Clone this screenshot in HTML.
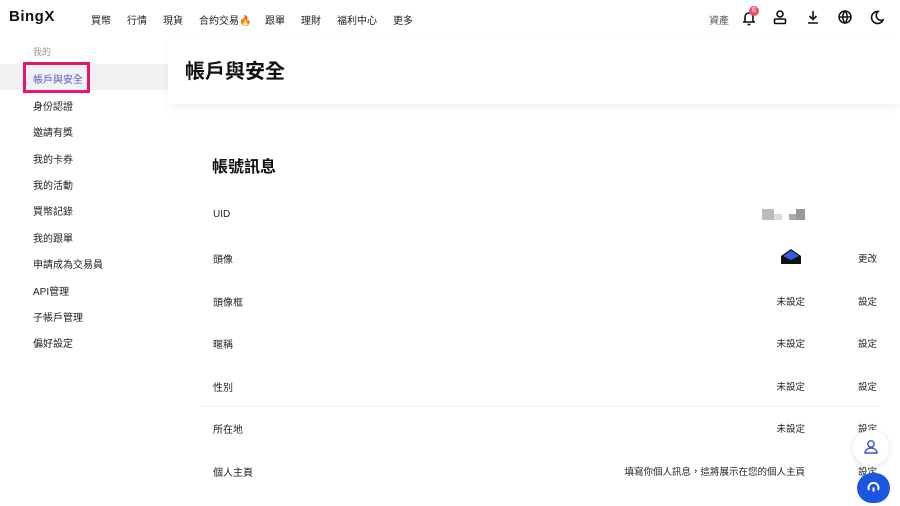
<!DOCTYPE html>
<html><head><meta charset="utf-8"><style>
*{margin:0;padding:0;box-sizing:border-box}
body{width:900px;height:506px;overflow:hidden;background:#fff;font-family:"Liberation Sans","Noto Sans CJK TC",sans-serif;color:#111;position:relative}
.a{position:absolute;white-space:nowrap}
.nav{font-size:10px;color:#222;top:12px}
.side{font-size:10px;color:#222;left:33px}
.lab{font-size:10px;color:#222;left:213px}
.val{font-size:9.5px;color:#222;right:95px}
.act{font-size:9.5px;color:#222;left:858px}
</style></head><body>
<div class="a" style="left:9px;top:8px;font-size:15px;font-weight:900;letter-spacing:0.5px">BingX</div>
<div class="a nav" style="left:91px">買幣</div>
<div class="a nav" style="left:127px">行情</div>
<div class="a nav" style="left:163px">現貨</div>
<div class="a nav" style="left:199px">合約交易<span style="color:#f60">🔥</span></div>
<div class="a nav" style="left:265px">跟單</div>
<div class="a nav" style="left:301px">理財</div>
<div class="a nav" style="left:337px">福利中心</div>
<div class="a nav" style="left:393px">更多</div>
<div class="a nav" style="left:709px;color:#555">資產</div>
<svg class="a" style="left:740px;top:8px" width="20" height="18" viewBox="0 0 20 18" fill="none" stroke="#111" stroke-width="1.6"><path d="M3 14h12M5 14V9a4 4 0 0 1 8 0v5M7.5 16.5h3"/></svg>
<div class="a" style="left:749px;top:6px;width:10px;height:10px;border-radius:5px;background:#f0506e;color:#fff;font-size:7px;text-align:center;line-height:10px">6</div>
<svg class="a" style="left:772px;top:9px" width="16" height="16" viewBox="0 0 16 16" fill="none" stroke="#111" stroke-width="1.6"><circle cx="8" cy="5" r="3"/><rect x="2.5" y="10" width="11" height="4.5" rx="1"/></svg>
<svg class="a" style="left:805px;top:9px" width="16" height="16" viewBox="0 0 16 16" fill="none" stroke="#111" stroke-width="1.6"><path d="M8 2v8M4.5 7l3.5 3.5L11.5 7M3 14h10"/></svg>
<svg class="a" style="left:837px;top:9px" width="16" height="16" viewBox="0 0 16 16" fill="none" stroke="#111" stroke-width="1.5"><circle cx="8" cy="8" r="6"/><path d="M2 8h12M8 2c-3 3.5-3 8.5 0 12M8 2c3 3.5 3 8.5 0 12"/></svg>
<svg class="a" style="left:869px;top:9px" width="16" height="16" viewBox="0 0 16 16" fill="none" stroke="#111" stroke-width="1.6"><path d="M9 2.5a6 6 0 1 0 5 8.5 5 5 0 0 1-5-8.5z"/></svg>

<div class="a" style="left:33px;top:45px;font-size:9px;color:#999">我的</div>
<div class="a" style="left:0;top:64px;width:168px;height:26px;background:#f2f2f2"></div>
<div class="a" style="left:23px;top:62px;width:67px;height:31px;border:3px solid #e8156f"></div>
<div class="a side" style="top:71px;color:#4c5bd4">帳戶與安全</div>
<div class="a side" style="top:98px">身份認證</div>
<div class="a side" style="top:124px">邀請有獎</div>
<div class="a side" style="top:151px">我的卡券</div>
<div class="a side" style="top:177px">我的活動</div>
<div class="a side" style="top:203px">買幣記錄</div>
<div class="a side" style="top:230px">我的跟單</div>
<div class="a side" style="top:256px">申請成為交易員</div>
<div class="a side" style="top:283px">API管理</div>
<div class="a side" style="top:309px">子帳戶管理</div>
<div class="a side" style="top:335px">偏好設定</div>

<div class="a" style="left:168px;top:40px;width:732px;height:64px;background:#fff;box-shadow:0 4px 8px rgba(0,0,0,0.05)"></div>
<div class="a" style="left:185px;top:55px;font-size:20px;font-weight:bold">帳戶與安全</div>
<div class="a" style="left:212px;top:153px;font-size:16px;font-weight:bold">帳號訊息</div>

<div class="a lab" style="top:209px">UID</div>
<div class="a" style="left:762px;top:209px;width:12px;height:11px;background:#bbb"></div>
<div class="a" style="left:774px;top:214px;width:8px;height:6px;background:#ddd"></div>
<div class="a" style="left:789px;top:214px;width:7px;height:6px;background:#aaa"></div>
<div class="a" style="left:796px;top:209px;width:9px;height:11px;background:#999"></div>

<div class="a lab" style="top:251px">頭像</div>
<svg class="a" style="left:780px;top:248px" width="22" height="18" viewBox="0 0 22 18"><path d="M1 8 11 1l10 7v8H1z" fill="#111"/><path d="M3 8l8-5.5 8 5.5-8 4z" fill="#2f5be8"/></svg>
<div class="a act" style="top:251px">更改</div>

<div class="a lab" style="top:294px">頭像框</div><div class="a val" style="top:294px">未設定</div><div class="a act" style="top:294px">設定</div>
<div class="a lab" style="top:336px">暱稱</div><div class="a val" style="top:336px">未設定</div><div class="a act" style="top:336px">設定</div>
<div class="a lab" style="top:379px">性別</div><div class="a val" style="top:379px">未設定</div><div class="a act" style="top:379px">設定</div>
<div class="a" style="left:200px;top:406px;width:680px;height:1px;background:#f0f0f0"></div>
<div class="a lab" style="top:421px">所在地</div><div class="a val" style="top:421px">未設定</div><div class="a act" style="top:421px">設定</div>
<div class="a lab" style="top:464px">個人主頁</div><div class="a val" style="top:464px">填寫你個人訊息，這將展示在您的個人主頁</div><div class="a act" style="top:464px">設定</div>

<div class="a" style="left:853px;top:430px;width:36px;height:36px;border-radius:18px;background:#fff;box-shadow:0 1px 6px rgba(0,0,0,0.12)"></div>
<svg class="a" style="left:863px;top:439px" width="16" height="17" viewBox="0 0 16 17" fill="none" stroke="#3b4fd8" stroke-width="1.4"><circle cx="8" cy="5" r="3.2"/><path d="M2 14c0-3 3-5 6-5s6 2 6 5z"/></svg>
<div class="a" style="left:857px;top:473px;width:33px;height:30px;border-radius:16px;background:#1a56e0"></div>
<svg class="a" style="left:865px;top:479px" width="17" height="17" viewBox="0 0 17 17" fill="none" stroke="#fff" stroke-width="2"><path d="M4 11a5 5 0 1 1 9 0M8.5 8.5v4"/></svg>
</body></html>
